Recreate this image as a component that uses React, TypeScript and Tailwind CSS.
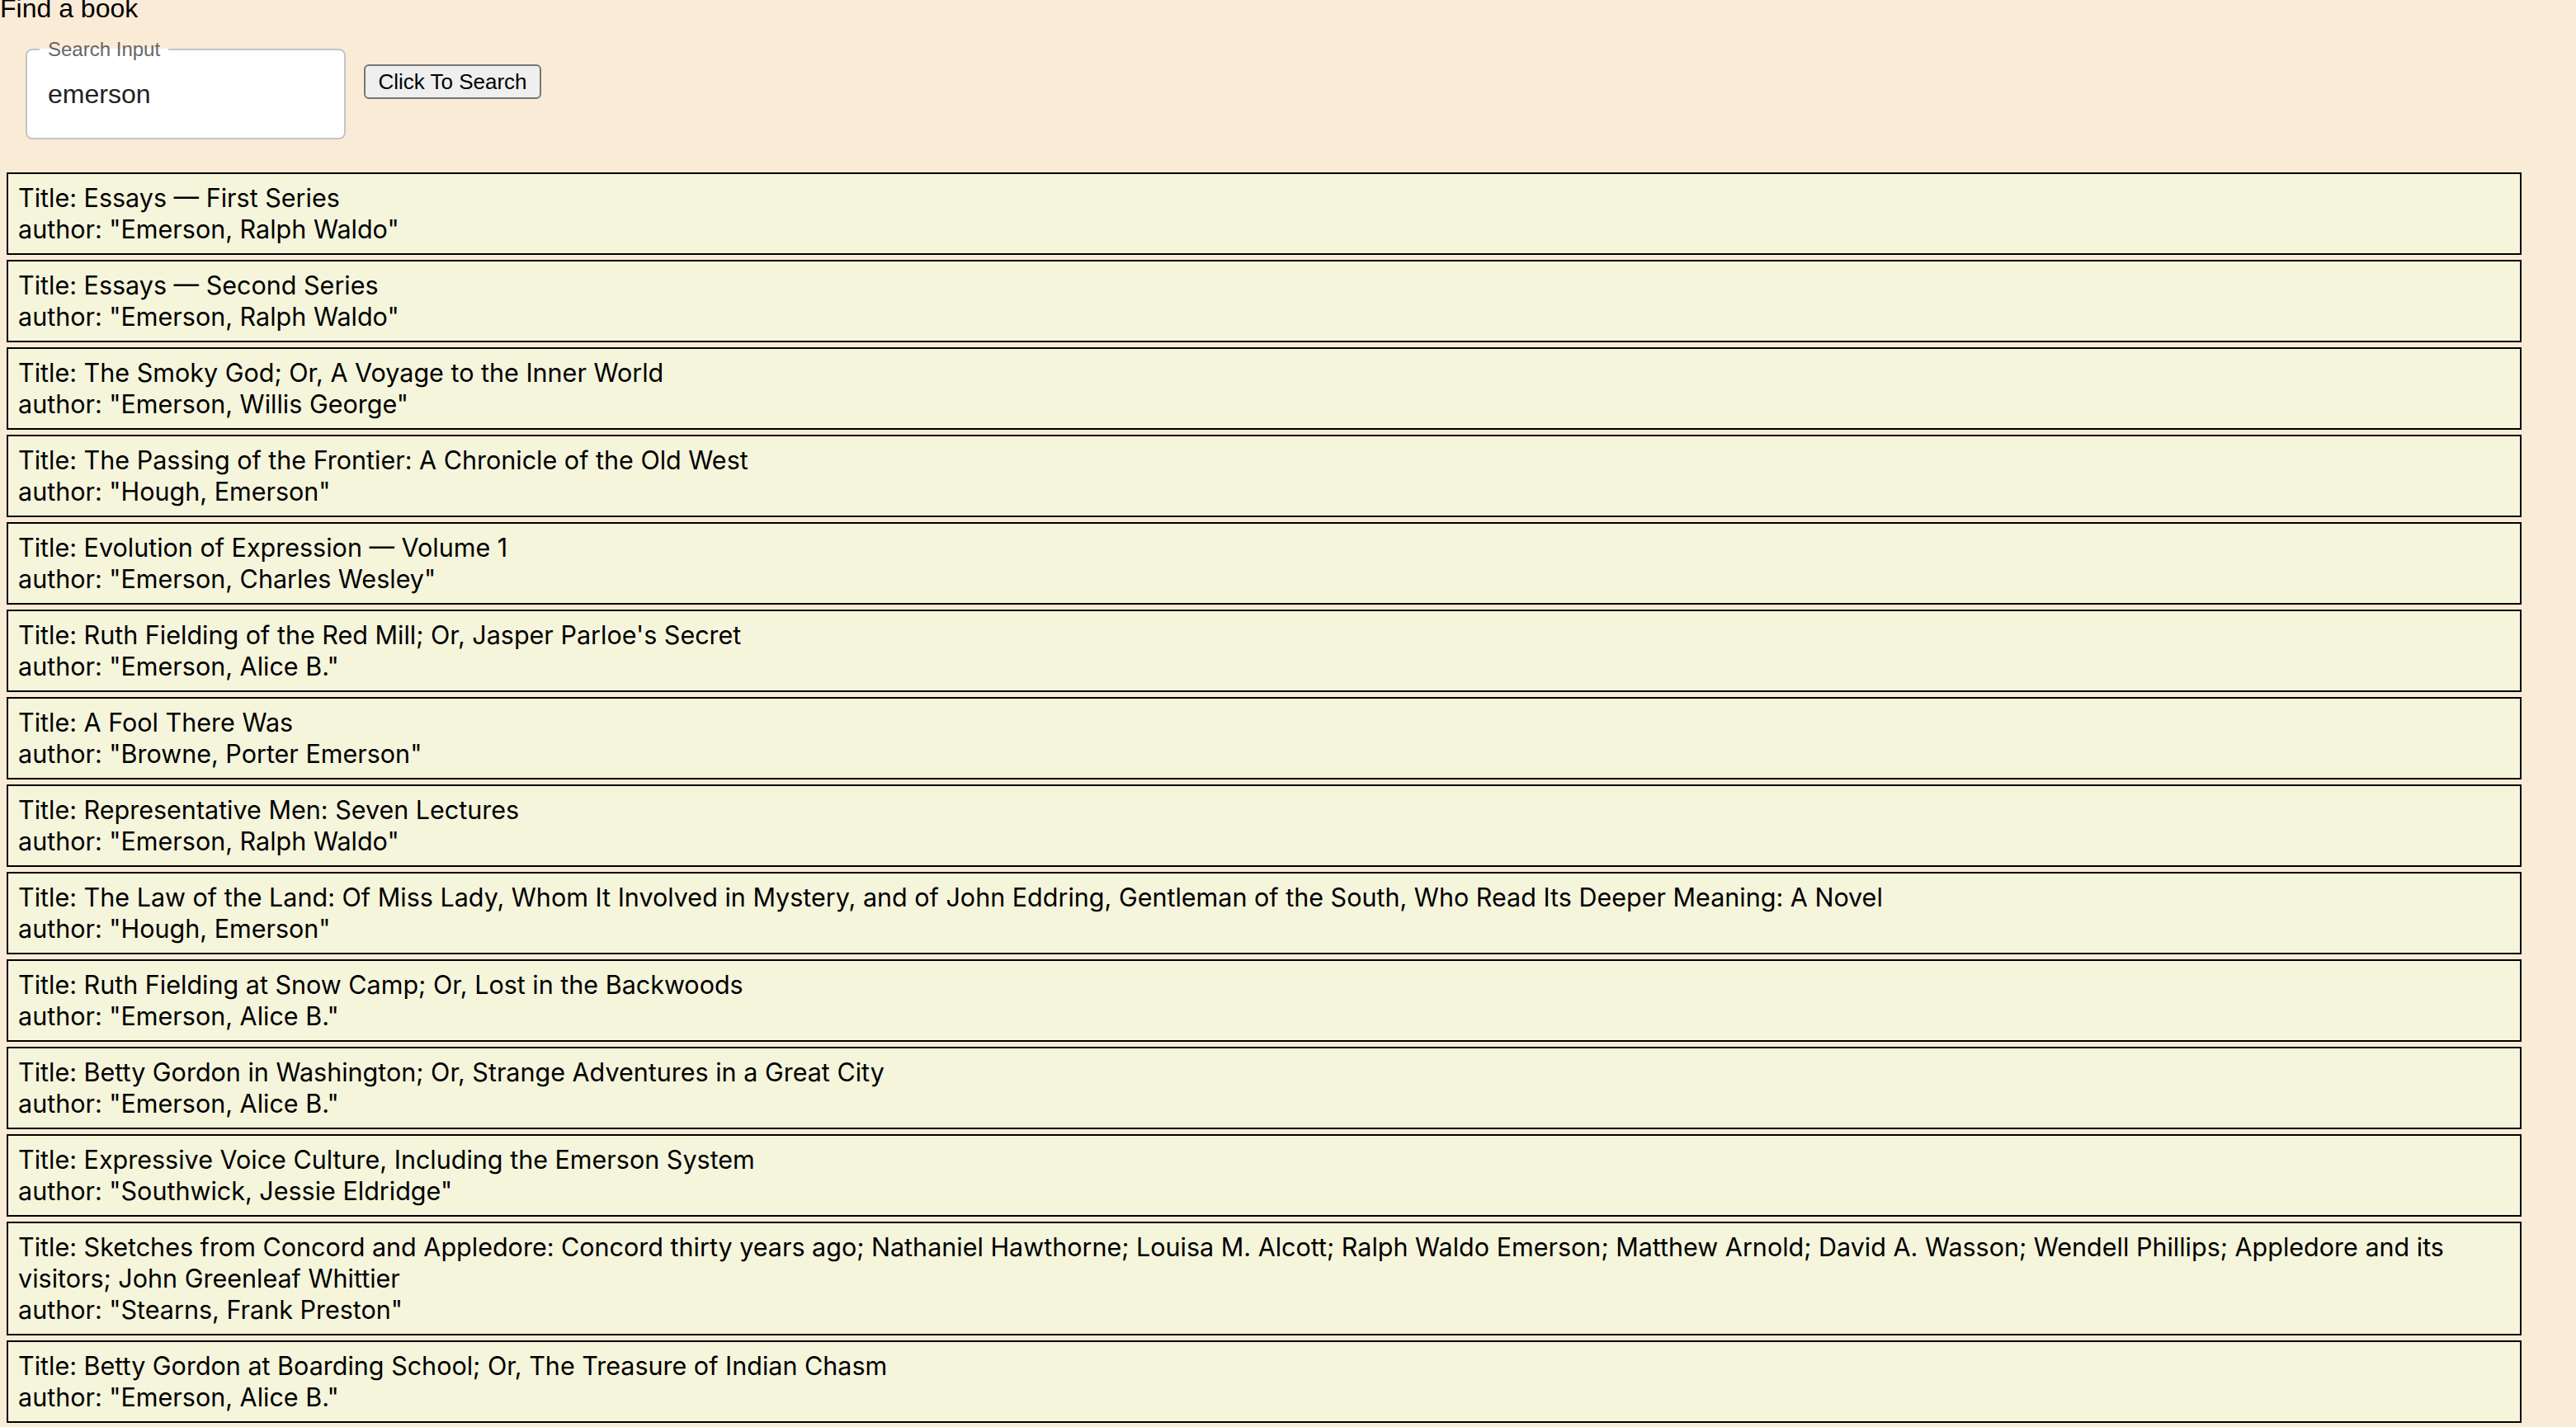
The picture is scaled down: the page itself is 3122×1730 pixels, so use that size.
import { useState } from 'react';

type Book = { title: string; author: string };

const books: Book[] = [
  { title: 'Essays — First Series', author: 'Emerson, Ralph Waldo' },
  { title: 'Essays — Second Series', author: 'Emerson, Ralph Waldo' },
  { title: 'The Smoky God; Or, A Voyage to the Inner World', author: 'Emerson, Willis George' },
  { title: 'The Passing of the Frontier: A Chronicle of the Old West', author: 'Hough, Emerson' },
  { title: 'Evolution of Expression — Volume 1', author: 'Emerson, Charles Wesley' },
  { title: "Ruth Fielding of the Red Mill; Or, Jasper Parloe's Secret", author: 'Emerson, Alice B.' },
  { title: 'A Fool There Was', author: 'Browne, Porter Emerson' },
  { title: 'Representative Men: Seven Lectures', author: 'Emerson, Ralph Waldo' },
  {
    title:
      'The Law of the Land: Of Miss Lady, Whom It Involved in Mystery, and of John Eddring, Gentleman of the South, Who Read Its Deeper Meaning: A Novel',
    author: 'Hough, Emerson',
  },
  { title: 'Ruth Fielding at Snow Camp; Or, Lost in the Backwoods', author: 'Emerson, Alice B.' },
  { title: 'Betty Gordon in Washington; Or, Strange Adventures in a Great City', author: 'Emerson, Alice B.' },
  { title: 'Expressive Voice Culture, Including the Emerson System', author: 'Southwick, Jessie Eldridge' },
  {
    title:
      'Sketches from Concord and Appledore: Concord thirty years ago; Nathaniel Hawthorne; Louisa M. Alcott; Ralph Waldo Emerson; Matthew Arnold; David A. Wasson; Wendell Phillips; Appledore and its visitors; John Greenleaf Whittier',
    author: 'Stearns, Frank Preston',
  },
  { title: 'Betty Gordon at Boarding School; Or, The Treasure of Indian Chasm', author: 'Emerson, Alice B.' },
];

export default function App(): JSX.Element {
  const [query, setQuery] = useState('emerson');

  return (
    <div className="min-h-screen overflow-hidden bg-[#faebd7] font-['Liberation_Sans',Arial,sans-serif] text-black">
      <h1 className="-mt-[8px] text-[32px] leading-[37px] font-normal">Find a book</h1>
      <div className="mt-[17px] flex items-start">
        <fieldset className="ml-[31px] w-[388px] rounded-[8px] border-2 border-[#c4c4c4] bg-white px-[15px] pb-[13px]">
          <legend className="px-[10px] text-[24px] leading-[28px] text-[#666666]">Search Input</legend>
          <input
            value={query}
            onChange={(event) => setQuery(event.target.value)}
            className="h-[80px] w-full bg-transparent pl-[10px] text-[32px] text-[#222222] outline-none"
          />
        </fieldset>
        <button
          type="button"
          className="mt-[32px] ml-[22px] h-[42px] w-[215px] rounded-[6px] border-2 border-[#767676] bg-[#efefef] text-[26px] leading-none text-black"
        >
          Click To Search
        </button>
      </div>
      <ul className="mt-[40px] ml-[8px] flex w-[3048px] flex-col gap-[6px] font-['Inter',sans-serif]">
        {books.map((book) => (
          <li
            key={book.title}
            className="border-2 border-black bg-[#f5f5dc] px-[12px] py-[10px] text-[30.5px] leading-[38px]"
          >
            <div>Title: {book.title}</div>
            <div>author: "{book.author}"</div>
          </li>
        ))}
      </ul>
    </div>
  );
}
